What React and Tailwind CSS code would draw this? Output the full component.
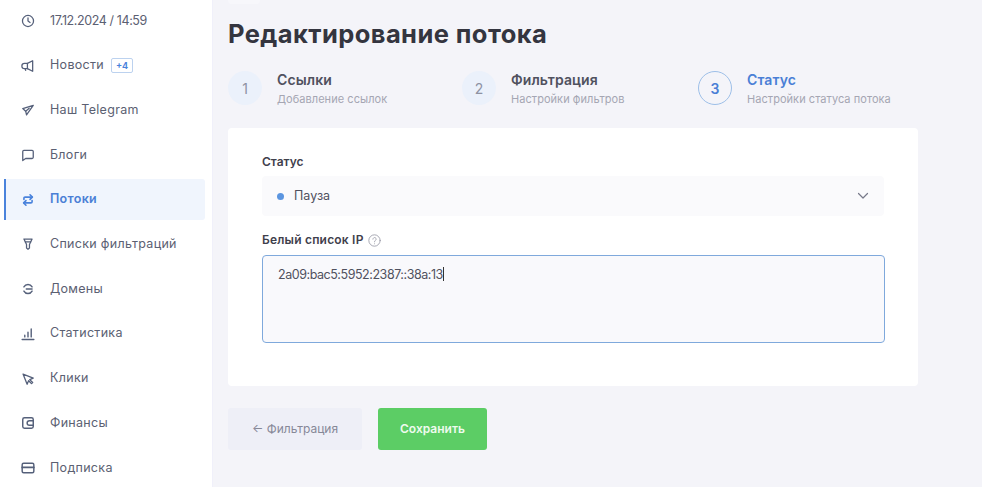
import React from "react";

const Ico = ({ children, sw = 2.2 }) => (
  <svg width="14" height="14" viewBox="0 0 24 24" fill="none" stroke="currentColor" strokeWidth={sw} strokeLinecap="round" strokeLinejoin="round" className="shrink-0">
    {children}
  </svg>
);

const icons = {
  clock: <Ico><circle cx="12" cy="12" r="9.5" /><path d="M12 6.5V12l3.5 2.5" /></Ico>,
  news: <Ico><path d="M20 3v18l-9-4.5H6a4 4 0 0 1 0-9h5z" /><path d="M11 7.5v9" /><path d="M7 16.5l1 3" /></Ico>,
  send: <Ico><path d="M21 4 3 9.5l5 4.5 1.5 6.5z" /><path d="M8 14l6-5" /></Ico>,
  blog: <Ico><path d="M3 6a2 2 0 0 1 2-2h14a2 2 0 0 1 2 2v10a2 2 0 0 1-2 2H8l-5 3.5z" /></Ico>,
  flow: <Ico sw={2.8}><path d="M5 11V9a2 2 0 0 1 2-2h12" /><path d="m15.5 3 4 4-4 4" /><path d="M19 13v2a2 2 0 0 1-2 2H5" /><path d="m8.5 21-4-4 4-4" /></Ico>,
  filter: <Ico><path d="M5 3.5h14L14.5 13v6L12 21l-2.5-2v-6z" /><path d="M7.5 8.5h9" /></Ico>,
  domain: <Ico sw={2.4}><path d="M5 8.5a8 8 0 0 1 14 0" /><path d="M5 15.5a8 8 0 0 0 14 0" /><path d="M9 12h10" /></Ico>,
  stats: <Ico sw={2.4}><path d="M2 21.5h20" /><path d="M6.5 17v-3M12 17V9M17.5 17V3.5" /></Ico>,
  clicks: <Ico><path d="M3.5 3.5 21 10.5l-6 2.5 5 5-2 2-5-5-2.5 6z" /></Ico>,
  wallet: <Ico sw={2.5}><rect x="3" y="3" width="18" height="18" rx="3" /><path d="M21 8h-6.5a4 4 0 0 0 0 8H21" /></Ico>,
  card: <Ico sw={2.5}><rect x="2" y="4" width="20" height="16" rx="2.5" /><path d="M2 11h20" strokeWidth="3" /></Ico>,
};

const items = [
  ["clock", "17.12.2024 / 14:59", null, false, "tracking-[-0.4px]"],
  ["news", "Новости", "+4"],
  ["send", "Наш Telegram"],
  ["blog", "Блоги"],
  ["flow", "Потоки", null, true],
  ["filter", "Списки фильтраций"],
  ["domain", "Домены"],
  ["stats", "Статистика"],
  ["clicks", "Клики"],
  ["wallet", "Финансы"],
  ["card", "Подписка"],
];

const steps = [
  ["1", "Ссылки", "Добавление ссылок", "w-[234px]"],
  ["2", "Фильтрация", "Настройки фильтров", "w-[236px]"],
  ["3", "Статус", "Настройки статуса потока", "", true],
];

export default function App() {
  return (
    <div className="flex h-[487px] w-[982px] overflow-hidden bg-[#f4f4f9] text-[#3a3b4a] font-['Inter','Noto_Sans',sans-serif]">
      <aside className="flex w-[213px] shrink-0 flex-col gap-[3.7px] bg-white pl-1 pr-[7px] pt-[0.5px] border-r border-[#f0f0fa]">
        {items.map(([ic, label, badge, active, track]) => (
          <div
            key={label}
            className={`flex h-[41px] shrink-0 items-center rounded-r-[3px] border-l-2 pl-[15px] ${active ? "border-[#4a83dc] bg-[#f0f5fd] text-[#4a7fd6]" : "border-transparent text-[#5b6072]"}`}
          >
            <span className={active ? "text-[#4a83dc]" : "text-[#55607a]"}>{icons[ic]}</span>
            <span className={`ml-[15px] text-[12.5px] ${track || "tracking-[0.3px]"} ${active ? "font-semibold" : "font-normal"}`}>{label}</span>
            {badge && (
              <span className="ml-[7px] rounded-[2px] border border-[#bcd2ef] px-[4px] text-[9px] leading-[13px] font-bold text-[#4a83dc]">{badge}</span>
            )}
          </div>
        ))}
      </aside>
      <main className="flex-1 pl-[15px]">
        <div className="h-[4px] w-[32px] rounded-b-[6px] bg-[#f7f7fb]" />
        <h1 className="mt-[14px] text-[25.5px] leading-[32px] font-bold tracking-[0.42px] text-[#34353f]">Редактирование потока</h1>
        <div className="mt-[20px] flex h-[36px] items-center">
          {steps.map(([n, t, s, w, cur]) => (
            <div key={n} className={`flex items-center ${w}`}>
              <div className={`flex h-[34px] w-[34px] items-center justify-center rounded-full text-[14px] ${cur ? "border border-[#9dbfe8] font-semibold text-[#4a7fd6]" : "bg-[#ebf1fb] text-[#8e92a3]"}`}>{n}</div>
              <div className="ml-[15px]">
                <div className={`text-[14px] leading-[18px] font-semibold tracking-[0.1px] ${cur ? "text-[#4a7fd6]" : "text-[#50515e]"}`}>{t}</div>
                <div className="mt-[3px] text-[11px] leading-[14px] tracking-[0.05px] text-[#a5a6b3]">{s}</div>
              </div>
            </div>
          ))}
        </div>
        <section className="mt-[22px] h-[258px] w-[690px] rounded-[4px] bg-white px-[34px] pt-[27px]">
          <div className="text-[12px] leading-[14px] font-semibold text-[#3f404c]">Статус</div>
          <div className="mt-[7px] flex h-[40px] items-center rounded-[4px] bg-[#fafafc] pl-[15px] pr-[15px]">
            <span className="h-[7px] w-[7px] rounded-full bg-[#5b95e0]" />
            <span className="ml-[10px] text-[12.5px] text-[#50515e]">Пауза</span>
            <svg className="ml-auto text-[#77798a]" width="12" height="8" viewBox="0 0 12 8" fill="none" stroke="currentColor" strokeWidth="1.2" strokeLinecap="round" strokeLinejoin="round"><path d="M1.5 1.5 6 6l4.5-4.5" /></svg>
          </div>
          <div className="mt-[17px] flex items-center text-[12px] leading-[14px] font-semibold tracking-[0.2px] text-[#3f404c]">
            Белый список IP
            <svg className="ml-[4px] text-[#9a9ba8]" width="13" height="13" viewBox="0 0 24 24" fill="none" stroke="currentColor" strokeWidth="1.6" strokeLinecap="round"><circle cx="12" cy="12" r="10.5" /><path d="M9 9.5a3 3 0 1 1 4.5 2.6c-1 .6-1.5 1.2-1.5 2.4" /><path d="M12 18h.01" /></svg>
          </div>
          <div className="mt-[8px] h-[88px] w-[623px] rounded-[4px] border border-[#7fa9dc] bg-[#f9f9fc] px-[15px] pt-[9px] text-[12.5px] leading-[17px] tracking-[-0.45px] text-[#50515e]">
            2a09:bac5:5952:2387::38a:13<span className="inline-block h-[14px] w-px translate-y-[2px] bg-[#333]" />
          </div>
        </section>
        <div className="mt-[22px] flex h-[42px] gap-[16px]">
          <button className="w-[134px] rounded-[3px] bg-[#eeeff7] text-[12px] text-[#868897]">← Фильтрация</button>
          <button className="w-[109px] rounded-[3px] bg-[#5ccd65] text-[12px] font-semibold text-[#eefbee]">Сохранить</button>
        </div>
      </main>
    </div>
  );
}
